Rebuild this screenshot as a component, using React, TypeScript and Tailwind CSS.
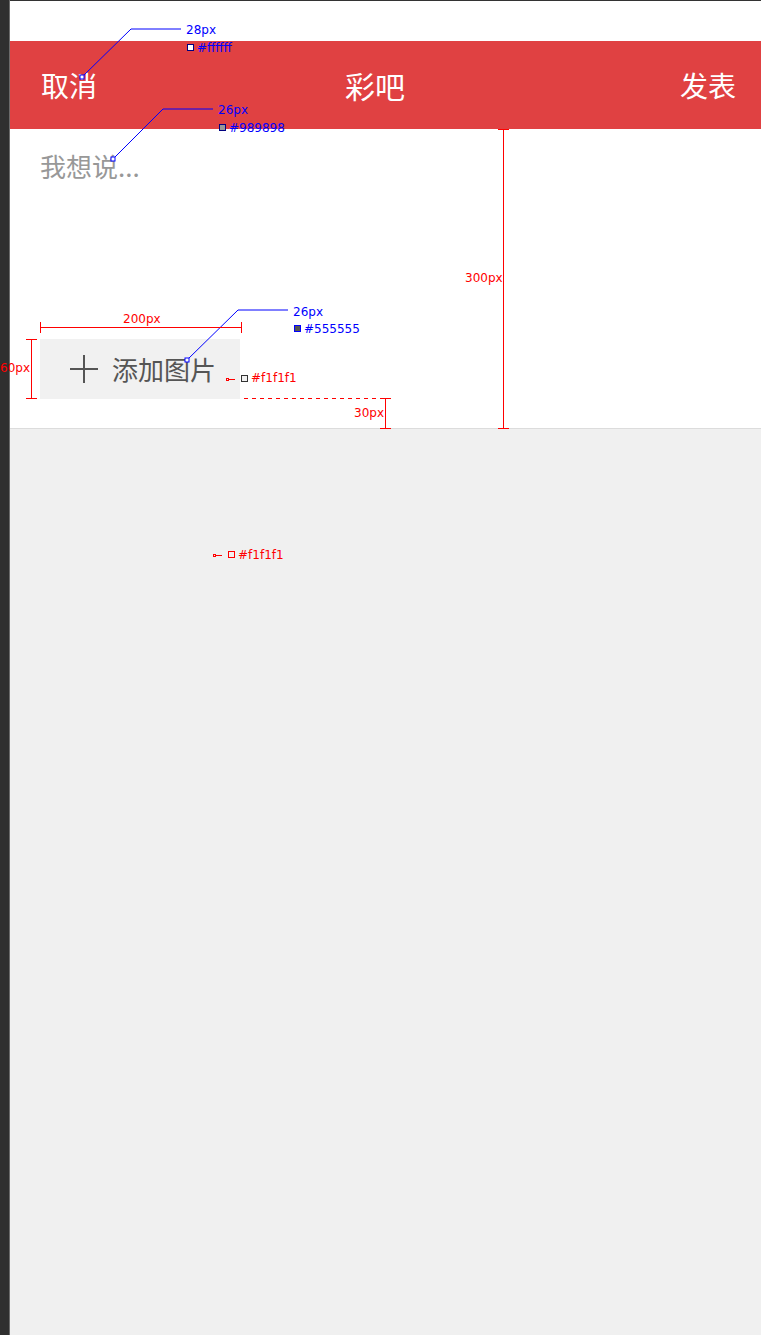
import React from "react";

const cjk = { fontFamily: '"Noto Sans CJK SC", "Noto Sans", sans-serif' };
const note = { fontFamily: '"DejaVu Sans", Verdana, sans-serif' };

function Label({ x, y, color, children }: { x: number; y: number; color: string; children: React.ReactNode }) {
  // annotation text lies over the mock, so it is placed by coordinates
  return (
    <span
      className="pointer-events-none absolute whitespace-nowrap text-[12px] leading-[14px]"
      style={{ ...note, left: x, top: y, color }}
    >
      {children}
    </span>
  );
}

function Annotations() {
  const b = "#0000ff";
  const r = "#ff0000";
  return (
    <div className="pointer-events-none absolute inset-0">
      <svg className="absolute inset-0" width="761" height="1335">
        {/* blue leaders */}
        <polyline points="82,77 131,29 181,29" fill="none" stroke={b} strokeWidth="1" />
        <rect x="80" y="75" width="4" height="4" fill="#fff" stroke={b} />
        <polyline points="113,159 163,109 213,109" fill="none" stroke={b} strokeWidth="1" />
        <rect x="111" y="157" width="4" height="4" fill="#fff" stroke={b} />
        <polyline points="187,360 238,310 288,310" fill="none" stroke={b} strokeWidth="1" />
        <rect x="185" y="358" width="4" height="4" fill="#fff" stroke={b} />
        {/* colour swatches */}
        <rect x="187.5" y="44.5" width="6" height="6" fill="#ffffff" stroke="#000080" />
        <rect x="219.5" y="124.5" width="6" height="6" fill="#989898" stroke="#000080" />
        <rect x="294.5" y="325.5" width="6" height="6" fill="#555555" stroke={b} />
        {/* 200px */}
        <line x1="40" y1="327.5" x2="241" y2="327.5" stroke={r} />
        <line x1="40.5" y1="322" x2="40.5" y2="333" stroke={r} />
        <line x1="241.5" y1="322" x2="241.5" y2="333" stroke={r} />
        {/* 60px */}
        <line x1="31.5" y1="339" x2="31.5" y2="399" stroke={r} />
        <line x1="26" y1="339.5" x2="37" y2="339.5" stroke={r} />
        <line x1="26" y1="398.5" x2="37" y2="398.5" stroke={r} />
        {/* #f1f1f1 pointer in button */}
        <rect x="226.5" y="378.5" width="2" height="2" fill="none" stroke={r} />
        <line x1="229" y1="379.5" x2="235" y2="379.5" stroke={r} />
        <rect x="241.5" y="375.5" width="6" height="6" fill="#f1f1f1" stroke="#333" />
        {/* 30px */}
        <line x1="244" y1="398.5" x2="385" y2="398.5" stroke={r} strokeDasharray="4 4" />
        <line x1="385.5" y1="398" x2="385.5" y2="428" stroke={r} />
        <line x1="380" y1="398.5" x2="391" y2="398.5" stroke={r} />
        <line x1="380" y1="428.5" x2="391" y2="428.5" stroke={r} />
        {/* 300px */}
        <line x1="503.5" y1="129" x2="503.5" y2="429" stroke={r} />
        <line x1="498" y1="129.5" x2="509" y2="129.5" stroke={r} />
        <line x1="498" y1="428.5" x2="509" y2="428.5" stroke={r} />
        {/* #f1f1f1 pointer on page */}
        <rect x="213.5" y="554.5" width="2" height="2" fill="none" stroke={r} />
        <line x1="216" y1="555.5" x2="222" y2="555.5" stroke={r} />
        <rect x="228.5" y="551.5" width="6" height="6" fill="#f1f1f1" stroke={r} />
      </svg>
      <Label x={186} y={23} color={b}>28px</Label>
      <Label x={197} y={41} color={b}>#ffffff</Label>
      <Label x={218} y={103} color={b}>26px</Label>
      <Label x={229} y={121} color={b}>#989898</Label>
      <Label x={293} y={305} color={b}>26px</Label>
      <Label x={304} y={322} color={b}>#555555</Label>
      <Label x={123} y={312} color={r}>200px</Label>
      <Label x={0} y={361} color={r}>60px</Label>
      <Label x={251} y={371} color={r}>#f1f1f1</Label>
      <Label x={354} y={406} color={r}>30px</Label>
      <Label x={465} y={271} color={r}>300px</Label>
      <Label x={238} y={548} color={r}>#f1f1f1</Label>
    </div>
  );
}

export default function App() {
  return (
    <div className="relative flex h-[1335px] w-[761px] overflow-hidden bg-[#f0f0f0]">
      <div className="w-[10px] flex-none border-r border-[#6a6a6a] bg-[#2f2f2f]" />
      <div className="flex min-w-0 flex-1 flex-col border-t border-[#333]">
        <div className="h-[40px] bg-white" />
        <header
          className="flex h-[88px] items-center bg-[#e04142] pl-[31px] pr-[25px] text-[28px] text-white"
          style={cjk}
        >
          <span>取消</span>
          <span className="flex-1 pr-[27px] text-center text-[30px]">彩吧</span>
          <span>发表</span>
        </header>
        <section className="flex h-[300px] flex-col justify-between border-b border-[#dcdcdc] bg-white pb-[29px] pl-[30px] pt-[17px]">
          <p className="text-[26px] leading-[39px] text-[#989898]" style={cjk}>
            我想说...
          </p>
          <button className="flex h-[60px] w-[200px] items-center gap-[12px] bg-[#f1f1f1] pl-[28px] text-[26px] text-[#555555]" style={cjk}>
            <svg width="32" height="32" viewBox="0 0 32 32" className="flex-none">
              <path d="M16 2v28M2 16h28" stroke="#555" strokeWidth="2" fill="none" />
            </svg>
            <span className="leading-none">添加图片</span>
          </button>
        </section>
        <div className="flex-1" />
      </div>
      <Annotations />
    </div>
  );
}
